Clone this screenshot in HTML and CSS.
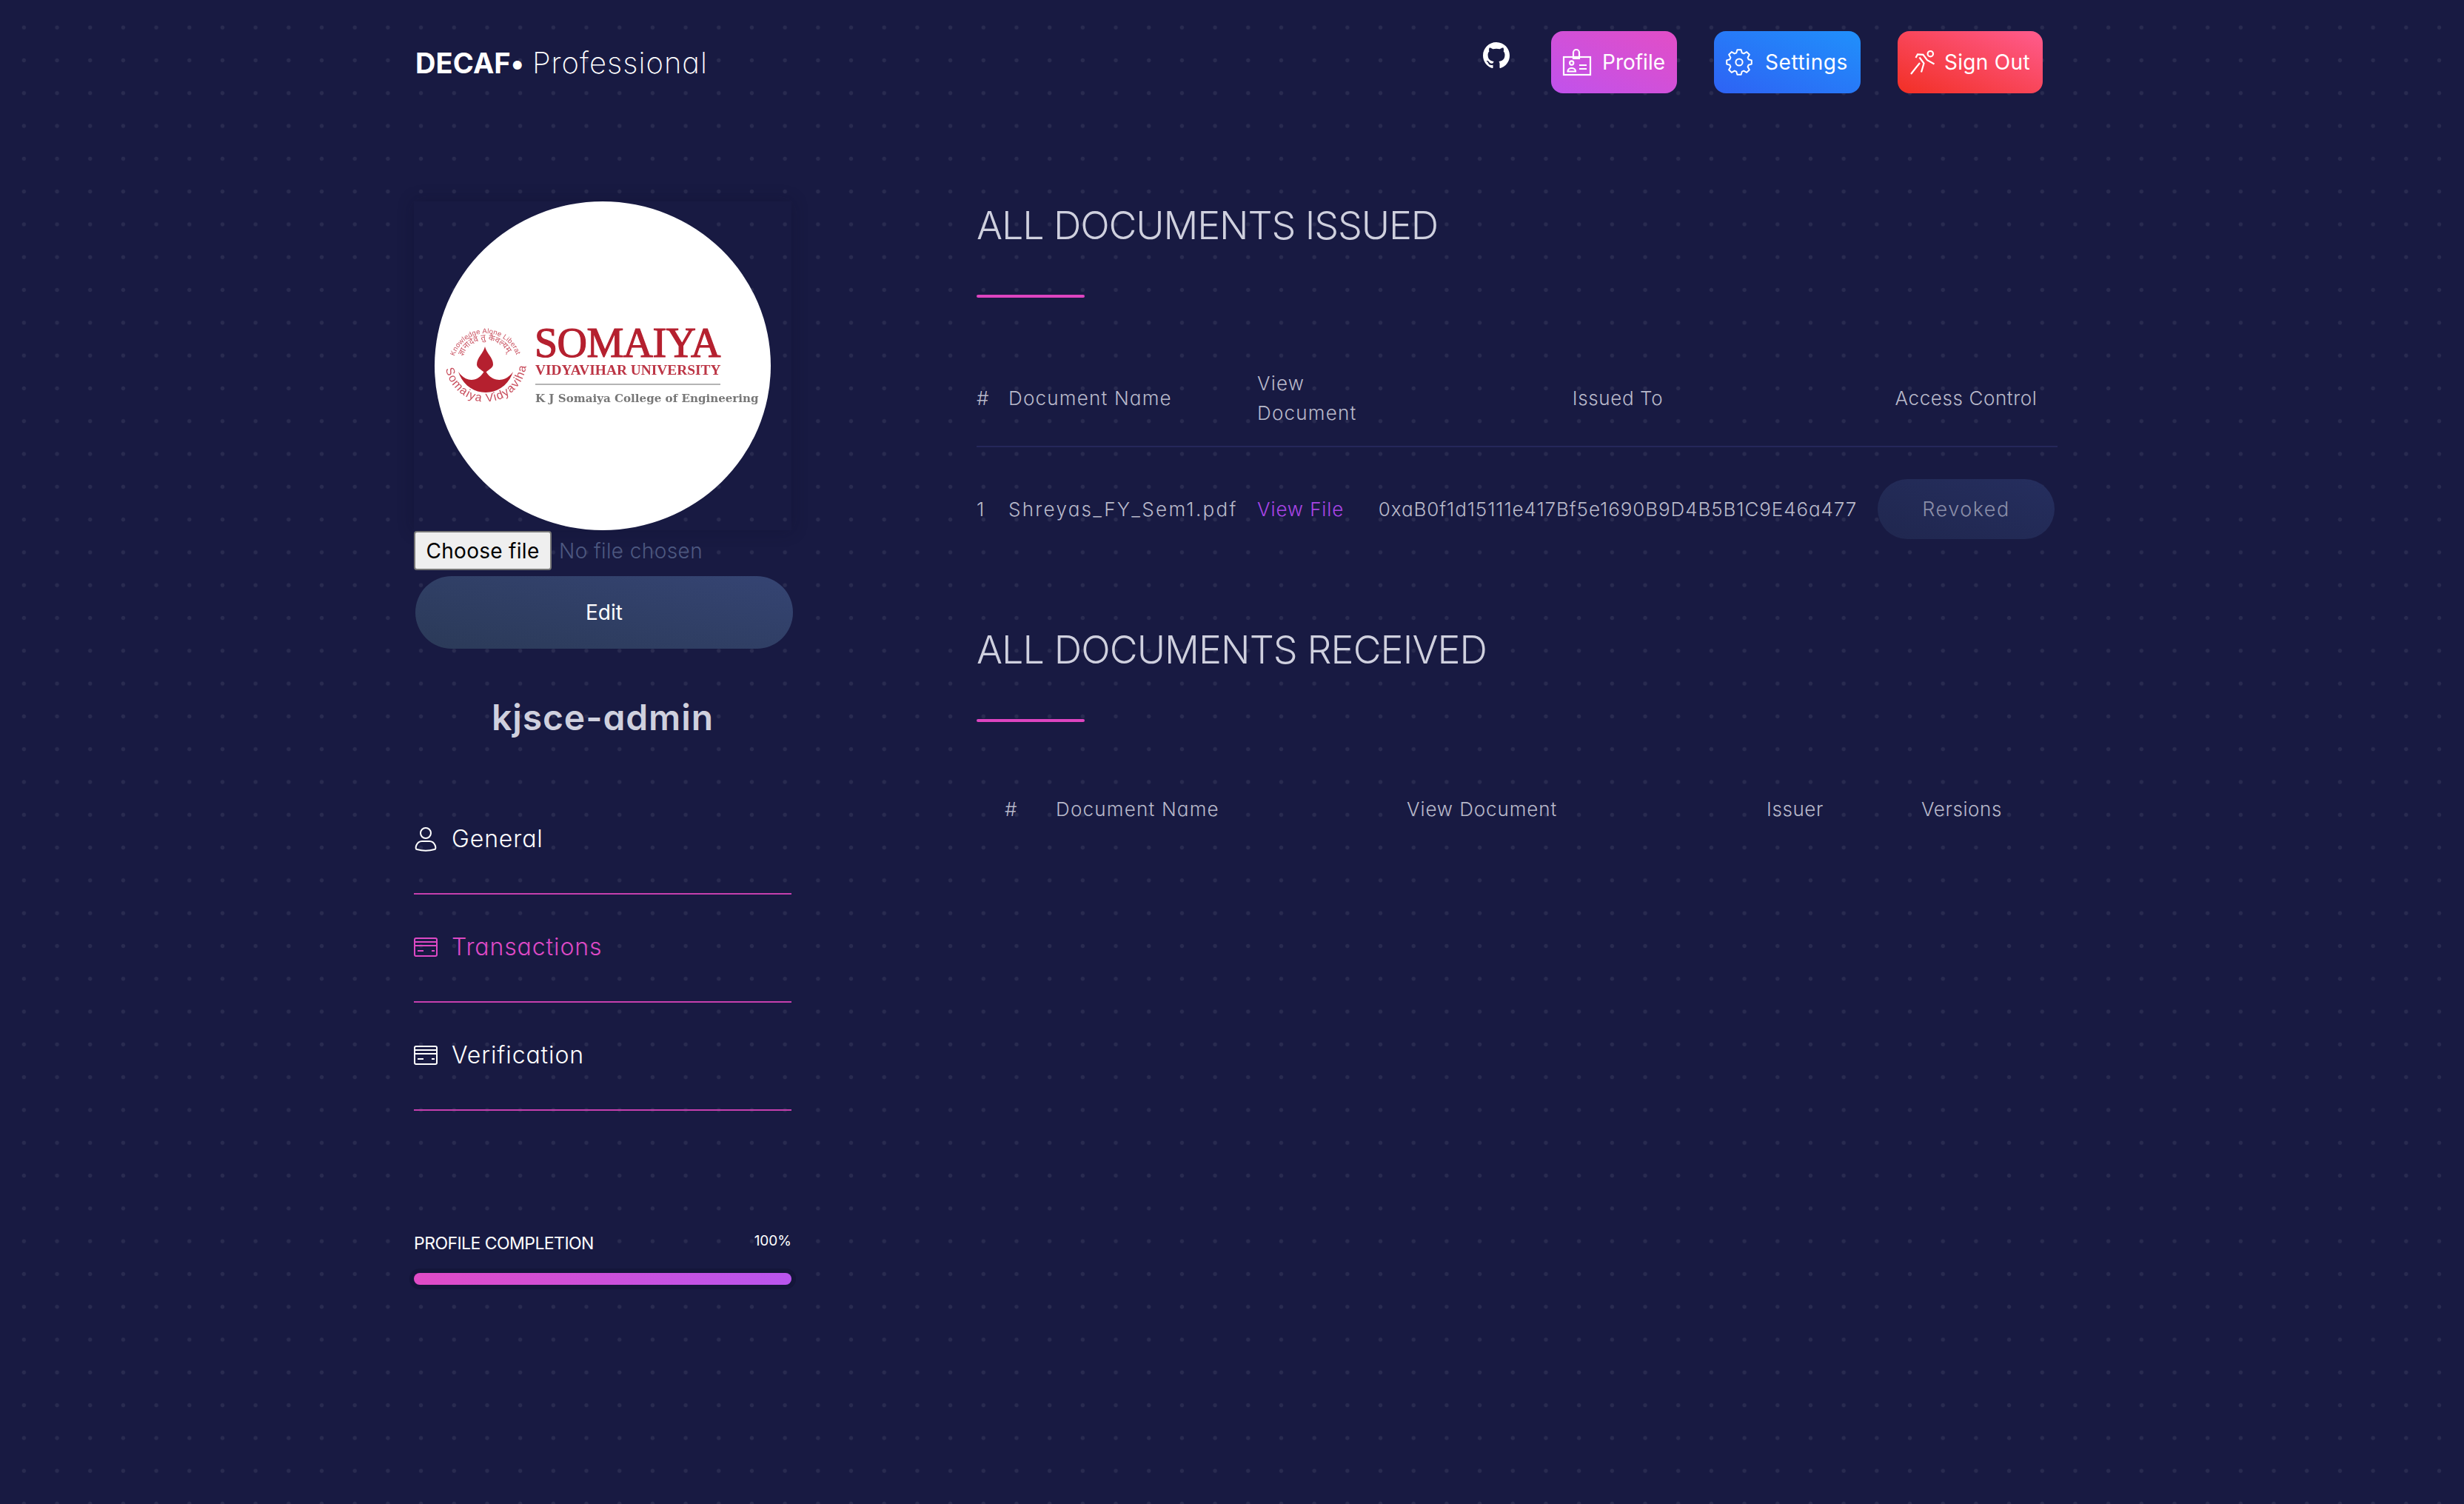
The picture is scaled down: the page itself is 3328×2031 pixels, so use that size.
FILE: index.html
```html
<!DOCTYPE html>
<html lang="en">
<head>
<meta charset="utf-8">
<title>DECAF Professional</title>
<link rel="stylesheet" href="styles.css">
</head>
<body>
<div class="page">
  <header class="topbar">
    <div class="brand"><b>DECAF•</b><span>Professional</span></div>
    <nav class="nav">
      <a class="gh" aria-label="GitHub"><svg viewBox="0 0 16 16" width="36" height="36"><path fill="#fff" d="M8 0C3.58 0 0 3.58 0 8c0 3.54 2.29 6.53 5.47 7.59.4.07.55-.17.55-.38 0-.19-.01-.82-.01-1.49-2.01.37-2.53-.49-2.69-.94-.09-.23-.48-.94-.82-1.13-.28-.15-.68-.52-.01-.53.63-.01 1.08.58 1.23.82.72 1.21 1.87.87 2.33.66.07-.52.28-.87.51-1.07-1.78-.2-3.64-.89-3.64-3.95 0-.87.31-1.59.82-2.15-.08-.2-.36-1.02.08-2.12 0 0 .67-.21 2.2.82.64-.18 1.32-.27 2-.27.68 0 1.36.09 2 .27 1.53-1.04 2.2-.82 2.2-.82.44 1.1.16 1.92.08 2.12.51.56.82 1.27.82 2.15 0 3.07-1.87 3.75-3.65 3.95.29.25.54.73.54 1.48 0 1.07-.01 1.93-.01 2.2 0 .21.15.46.55.38A8.013 8.013 0 0016 8c0-4.42-3.58-8-8-8z"/></svg></a>
      <a class="btn btn-profile">
        <svg viewBox="10 8 40 38" width="40" height="38" fill="none" stroke="#fff" stroke-width="2.2"><rect x="12" y="20" width="36" height="24"/><path d="M25 22v-8a4 4 0 0 1 8 0v8z"/><circle cx="22.7" cy="28" r="2.6"/><path d="M17.5 39.5c0-6 10.500-6 10.500 0z"/><path d="M33 31h10M33 36h10"/></svg>
        <span>Profile</span>
      </a>
      <a class="btn btn-settings">
        <svg viewBox="-18 -18 36 36" width="36" height="36" fill="none" stroke="#fff" stroke-width="2"><polygon stroke-linejoin="round" points="-3.8,-12.6 -2.600,-16.800 2.600,-16.800 3.800,-12.600 6.220,-11.600 10.180,-13.860 13.860,-10.180 11.600,-6.220 12.600,-3.800 16.800,-2.600 16.800,2.600 12.600,3.800 11.600,6.220 13.860,10.180 10.180,13.860 6.220,11.600 3.800,12.600 2.600,16.800 -2.600,16.800 -3.800,12.600 -6.220,11.600 -10.180,13.860 -13.860,10.180 -11.600,6.220 -12.600,3.800 -16.800,2.600 -16.800,-2.600 -12.600,-3.800 -11.600,-6.220 -13.860,-10.180 -10.180,-13.860 -6.220,-11.600"/><circle r="4.6"/></svg>
        <span>Settings</span>
      </a>
      <a class="btn btn-signout">
        <svg viewBox="8 8 38 38" width="38" height="38" fill="none" stroke="#fff" stroke-width="2.2"><circle cx="37.3" cy="15.700" r="3.700"/><path d="M17.500 21l2.500-4.500 7.500.4 5.500 7.300 9.500 5.300"/><path d="M22.500 20.500l6 8-3.500 12"/><path d="M23 28l-4.500 5.500L11 43"/></svg>
        <span>Sign Out</span>
      </a>
    </nav>
  </header>

  <div class="layout">
    <aside class="side">
      <div class="avatar-card">
        <svg class="avatar" viewBox="0 0 454 444" width="454" height="444">
          <ellipse cx="227" cy="222" rx="227" ry="222" fill="#fff"/>
          <defs>
            <path id="arc-top" d="M27 209A44 44 0 0 1 111 209"/>
            <path id="arc-mid" d="M38 209A33 33 0 0 1 100 209"/>
            <path id="arc-bottom" d="M15 226A55 55 0 0 0 123 226"/>
          </defs>
          <text class="arc-text arc-small"><textPath href="#arc-top">Knowledge Alone Liberates</textPath></text>
          <text class="arc-text arc-mid"><textPath href="#arc-mid">ज्ञानादेव तु कैवल्यम्</textPath></text>
          <path d="M68 196C70 205 79 211 79 220C79 225 73 227 70 230H66C63 227 57 225 57 220C57 211 66 205 68 196z" fill="#b5202f"/>
          <path d="M32 230C42 245 60 245 68 227C76 245 96 245 106 230C100 248 85 258 69 258C53 258 38 248 32 230z" fill="#b5202f"/>
          <text class="arc-text arc-large"><textPath href="#arc-bottom">Somaiya Vidyavihar</textPath></text>
          <text class="lg-title" x="135" y="210">SOMAIYA</text>
          <text class="lg-sub" x="136" y="234">VIDYAVIHAR UNIVERSITY</text>
          <rect x="136" y="246" width="250" height="2" fill="#b4b4b4"/>
          <text class="lg-college" x="136" y="271">K J Somaiya College of Engineering</text>
        </svg>
      </div>
      <div class="file-row">
        <button class="file-btn" type="button">Choose file</button>
        <span class="file-none">No file chosen</span>
      </div>
      <button class="edit-btn" type="button">Edit</button>
      <h2 class="username">kjsce-admin</h2>
      <ul class="menu">
        <li class="menu-item">
          <svg class="menu-ico" viewBox="0 0 32 34" width="32" height="34" fill="none" stroke="currentColor" stroke-width="2"><circle cx="16" cy="9" r="7"/><path d="M4 31c-3 0 -1-11 7-11h10c8 0 10 11 7 11 -7 2-17 2-24 0z"/></svg>
          <span>General</span>
        </li>
        <li class="menu-item active">
          <svg class="menu-ico" viewBox="0 0 32 26" width="32" height="26" fill="none" stroke="currentColor" stroke-width="2"><rect x="1" y="1" width="30" height="24" rx="2"/><path d="M1 6h30M1 11h30"/><path d="M5 18h8M24 18h4"/></svg>
          <span>Transactions</span>
        </li>
        <li class="menu-item">
          <svg class="menu-ico" viewBox="0 0 32 26" width="32" height="26" fill="none" stroke="currentColor" stroke-width="2"><rect x="1" y="1" width="30" height="24" rx="2"/><path d="M1 6h30M1 11h30"/><path d="M5 18h8M24 18h4"/></svg>
          <span>Verification</span>
        </li>
      </ul>
      <div class="progress">
        <div class="progress-head"><span class="progress-label">PROFILE COMPLETION</span><span class="progress-val">100%</span></div>
        <div class="progress-track"><div class="progress-fill"></div></div>
      </div>
    </aside>

    <main class="content">
      <section class="docs docs-issued">
        <h1 class="title">ALL DOCUMENTS ISSUED</h1>
        <div class="title-rule"></div>
        <table class="tbl tbl-issued">
          <thead>
            <tr><th>#</th><th class="wide">Document Name</th><th class="wide">View<br>Document</th><th class="center">Issued To</th><th class="center">Access Control</th></tr>
          </thead>
          <tbody>
            <tr><td>1</td><td class="filename">Shreyas_FY_Sem1.pdf</td><td><a class="link">View File</a></td><td class="center address">0xaB0f1d15111e417Bf5e1690B9D4B5B1C9E46a477</td><td class="center"><span class="revoked">Revoked</span></td></tr>
          </tbody>
        </table>
      </section>
      <section class="docs docs-received">
        <h1 class="title title-received">ALL DOCUMENTS RECEIVED</h1>
        <div class="title-rule"></div>
        <table class="tbl tbl-received">
          <thead>
            <tr><th>#</th><th class="wide">Document Name</th><th class="narrow">View Document</th><th>Issuer</th><th>Versions</th></tr>
          </thead>
        </table>
      </section>
    </main>
  </div>
</div>
</body>
</html>
```
FILE: styles.css
```css
* { box-sizing: border-box; }
html, body { margin: 0; padding: 0; }
body {
  width: 3328px;
  height: 2031px;
  overflow: hidden;
  background-color: #181a42;
  background-image: radial-gradient(circle, #292b50 0, #292b50 2.2px, rgba(41,43,80,0) 3.2px);
  background-size: 44.7px 44.3px;
  background-position: 10px 15px;
  font-family: Inter, "Noto Sans", sans-serif;
  font-feature-settings: "cv11";
  color: #fff;
}
.page { padding: 42px 0 0 559px; width: 2220px; box-sizing: content-box; }

.topbar { display: flex; justify-content: space-between; align-items: center; height: 84px; width: 2200px; }
.brand { font-size: 40px; font-weight: 200; letter-spacing: 1px; padding-left: 2px; }
.brand b { font-size: 38px; font-weight: 700; letter-spacing: .1px; margin-right: 11px; }
.nav { display: flex; align-items: center; gap: 50px; }
.gh { display: block; height: 36px; margin: -18px 6px 0 0; }
.btn { display: flex; align-items: center; height: 84px; border-radius: 16px; font-size: 28px; font-weight: 400; color: #fff; }
.btn-profile { width: 170px; padding-left: 15px; gap: 14px; background: linear-gradient(to top right, #c052ec, #e24ec6); }
.btn-settings { width: 198px; padding-left: 16px; gap: 17px; letter-spacing: .6px; background: linear-gradient(to top right, #2e62f4, #2090fb); }
.btn-signout { width: 196px; padding-left: 15px; gap: 10px; letter-spacing: .3px; background: linear-gradient(to top right, #f22f24, #ff5c8e); }

.layout { display: flex; gap: 250px; padding-top: 146px; }
.side { width: 510px; flex: none; }
.avatar-card { display: flex; justify-content: center; height: 444px; box-shadow: 0 0 20px rgba(14,14,40,.3); }
.avatar { display: block; filter: blur(.4px); }
.arc-text { fill: #c9505f; font-family: "Liberation Sans", "Noto Sans", sans-serif; }
.arc-small { font-size: 9.500px; letter-spacing: .2px; }
.arc-mid { font-size: 11px; }
.arc-large { font-size: 16px; letter-spacing: 1.2px; }
.lg-title { font-family: "Liberation Serif", serif; font-size: 56px; letter-spacing: -.6px; fill: #b5202f; stroke: #b5202f; stroke-width: 1.2px; }
.lg-sub { font-family: "Liberation Serif", serif; font-size: 19.400px; font-weight: 700; fill: #bc3545; }
.lg-college { font-family: "DejaVu Serif", serif; font-size: 15.100px; font-weight: 700; fill: #777; }

.file-row { display: flex; align-items: center; gap: 10px; height: 53px; margin-top: 1px; }
.file-btn { width: 186px; height: 53px; padding: 0; background: #efefef; border: 2px solid #767676; border-radius: 4px; font: 400 28px Inter, sans-serif; letter-spacing: .3px; color: #000; }
.file-none { font-size: 28px; font-weight: 300; color: #4d5880; letter-spacing: .4px; }
.edit-btn { display: block; width: 510px; height: 98px; margin: 8px 0 0 2px; border: 0; border-radius: 49px; background: linear-gradient(to top right, #2b3a58, #354473); color: #fff; font: 400 28px Inter, sans-serif; }
.username { margin: 59px 0 0; font-size: 48px; line-height: 68px; font-weight: 600; color: #cfd0de; text-align: center; letter-spacing: .9px; }

.menu { list-style: none; margin: 59px 0 0; padding: 0; }
.menu-item { display: flex; align-items: center; height: 146px; padding-bottom: 3px; border-bottom: 2px solid #c63fae; font-size: 32px; font-weight: 300; letter-spacing: .9px; }
.menu-item.active { color: #dd49c5; }
.menu-ico { width: 32px; flex: none; margin-right: 19px; }
.progress { margin-top: 163px; }
.progress-head { display: flex; justify-content: space-between; align-items: flex-start; }
.progress-label { font-size: 23px; line-height: 32px; font-weight: 400; letter-spacing: -.55px; }
.progress-val { font-size: 19px; line-height: 26px; font-weight: 400; }
.progress-track { height: 16px; margin-top: 24px; border-radius: 8px; box-shadow: 0 0 0 6px #14163a; }
.progress-fill { height: 100%; border-radius: 8px; background: linear-gradient(to right, #e04bc6, #b955ee); }

.content { width: 1460px; flex: none; }
.title { margin: -3px 0 0; font-size: 52px; line-height: 72px; font-weight: 300; letter-spacing: -1.1px; color: #cfd0de; }
.title-received { letter-spacing: -.9px; }
.title-rule { width: 146px; height: 4px; margin-top: 57px; border-radius: 2px; background: #dd44c0; }
.tbl { border-collapse: collapse; table-layout: fixed; width: 1460px; font-size: 26px; font-weight: 300; letter-spacing: .6px; color: #b8b9ca; }
.tbl th { font-weight: 300; text-align: left; padding: 0; }
.tbl .wide { letter-spacing: 1.2px; }
.tbl .narrow { letter-spacing: .9px; }
.tbl td { padding: 0; }
.tbl .filename { letter-spacing: 2.300px; }
.tbl .address { letter-spacing: .9px; }
.tbl .center { text-align: center; }
.tbl-issued { margin-top: 71px; }
.tbl-issued th:nth-child(1) { width: 43px; }
.tbl-issued th:nth-child(2) { width: 336px; }
.tbl-issued th:nth-child(3) { width: 148px; }
.tbl-issued th:nth-child(4) { width: 678px; }
.tbl-issued th:nth-child(5) { padding-left: 8px; }
.tbl-issued thead tr { height: 130px; border-bottom: 2px solid #25275a; line-height: 40px; }
.tbl-issued tbody tr { height: 168px; }
.tbl-issued td:nth-child(5) { padding-left: 8px; }
.link { color: #a845e6; letter-spacing: .9px; }
.revoked { display: inline-block; width: 239px; height: 81px; line-height: 81px; border-radius: 41px; background: linear-gradient(to top right, #20274f, #252e5e); color: #8b8ea8; font-size: 27px; letter-spacing: 1.5px; }
.docs-received { margin-top: 74px; }
.tbl-received { margin-top: 82px; }
.tbl-received thead tr { height: 70px; }
.tbl-received th:nth-child(1) { width: 107px; padding-left: 38px; }
.tbl-received th:nth-child(2) { width: 474px; }
.tbl-received th:nth-child(3) { width: 486px; }
.tbl-received th:nth-child(4) { width: 209px; }
```
